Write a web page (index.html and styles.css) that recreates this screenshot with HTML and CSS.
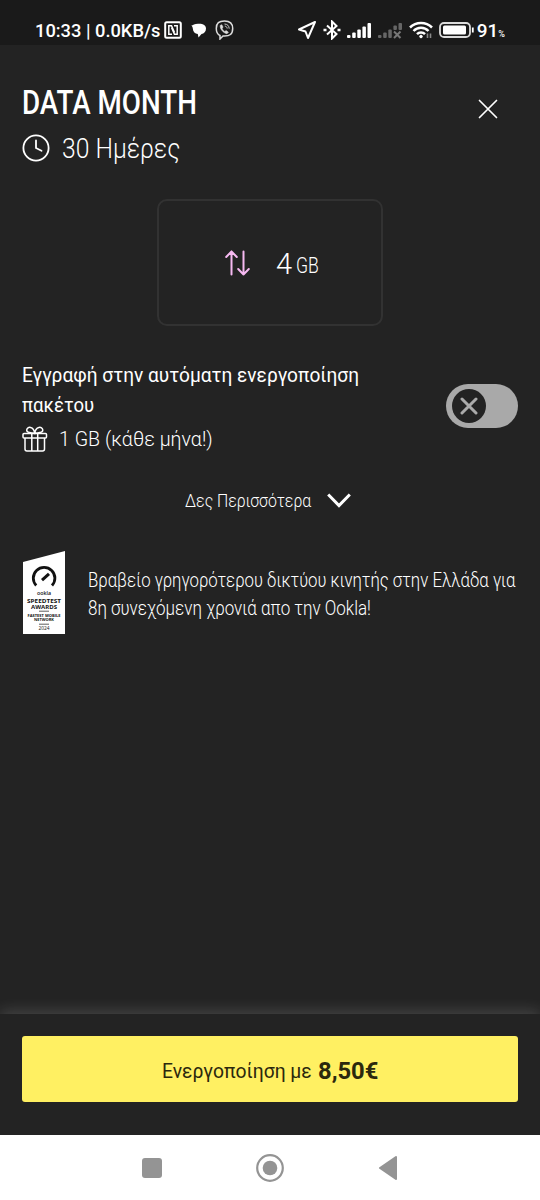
FILE: index.html
```html
<!DOCTYPE html>
<html lang="el">
<head>
<meta charset="utf-8">
<title>Data Month</title>
<link rel="stylesheet" href="styles.css">
</head>
<body>
<div class="screen">
  <header class="status">
    <div class="status-left">
      <span class="clock">10:33 | 0.0KB/s</span>
      <svg class="nfc" width="18" height="18" viewBox="0 0 18 18" fill="none" stroke="#fff" stroke-width="2"><rect x="1.200" y="1.200" width="15.600" height="15.600" rx="1.500"/><path d="M8 13.300H4.800V4.800h2.700L10.500 11.500M10 4.800h3.200v8.500h-2.700L7.500 6.500" stroke-width="1.500"/></svg>
      <svg class="chat" width="16" height="15" viewBox="0 0 16 15" fill="#fff"><path d="M.3 2.500C2 2.200 3.500.8 7 .7c5-.3 8 1.500 8 4.800s-2 5-4.500 5.500L7.500 14.500l-.7-3.500C4 10.800 2 9 1.800 5.500 1.700 4 1 3.200.3 2.500z"/></svg>
      <svg class="viber" width="19" height="20" viewBox="0 0 19 20" fill="none" stroke="#ddd" stroke-width="1.500"><path d="M9.500 1C4 1 1.300 3 1.300 8.500c0 4 1.200 6 3.700 7V19l3-3c7 .5 9.700-2 9.700-7.500S15 1 9.500 1z"/><path d="M5.200 5.500C5 9 8 12.800 12 13.800l1.400-1.600-2.300-1.600-1.200.9C8.500 11 7.500 9.500 7 8.200l1.100-.9L6.800 4.700z" fill="#ddd" stroke-width=".6"/><path d="M9.500 4c3 .2 4.500 1.700 4.700 4.700M9.800 6.100c1.500.2 2.200.9 2.400 2.400" stroke-width=".9"/></svg>
    </div>
    <div class="status-right">
      <svg width="20" height="20" viewBox="0 0 20 20" fill="none" stroke="#fff" stroke-width="2" stroke-linejoin="round"><path d="M18 2 2 9.500l6.500 2L11 18z"/></svg>
      <svg width="18" height="20" viewBox="0 0 18 20" fill="none" stroke="#fff" stroke-width="2"><path d="m4 5.500 9.500 8.500L9 18.500v-17L13.500 6 4 14.500"/><path d="M.5 10h3M14.500 10h3" stroke-width="2.500"/></svg>
      <svg width="25" height="17" viewBox="0 0 25 17" fill="#fff"><rect y="13" width="3.500" height="3" rx="1"/><rect x="5.200" y="10.500" width="3.500" height="5.500" rx="1"/><rect x="10.300" y="7.500" width="3.500" height="8.500" rx="1"/><rect x="15.400" y="4.500" width="3.500" height="11.500" rx="1"/><rect x="20.500" y="1" width="3.500" height="15" rx="1"/></svg>
      <svg width="25" height="17" viewBox="0 0 25 17" fill="#666"><rect y="13" width="3.500" height="3" rx="1"/><rect x="5.200" y="10.500" width="3.500" height="5.500" rx="1"/><rect x="10.300" y="7.500" width="3.500" height="8.500" rx="1"/><rect x="15.400" y="3.500" width="3.500" height="4.500" rx="1"/><rect x="20.500" y="1" width="3.500" height="7" rx="1"/><path d="m16 9.500 6.500 6.500m0-6.500L16 16" stroke="#777" stroke-width="2"/></svg>
      <svg width="24" height="18" viewBox="0 0 24 18" fill="none" stroke="#fff" stroke-width="2.500"><path d="M1 6.500a15.500 15.500 0 0 1 22 0M4.500 10a10.500 10.500 0 0 1 15 0M8 13.200a5.600 5.600 0 0 1 8 0"/><circle cx="12" cy="15.500" r="1.300" fill="#fff" stroke-width="1"/><path d="M18.500 12.500v4.500M21.500 12.500v4.500" stroke="#888" stroke-width="1.600"/></svg>
      <svg width="35" height="16" viewBox="0 0 35 16" fill="none"><rect x="1" y="1" width="30" height="14" rx="4" stroke="#ddd" stroke-width="1.800"/><rect x="4" y="3.500" width="23" height="9" rx="1.500" fill="#fff"/><path d="M33.800 5.500v5" stroke="#fff" stroke-width="1.800"/></svg>
      <span class="battery">91<small>%</small></span>
    </div>
  </header>

  <main class="content">
    <section class="heading">
      <div>
        <h1 class="title"><span class="fit">DATA MONTH</span></h1>
        <div class="duration">
          <svg width="28" height="28" viewBox="0 0 28 28" fill="none" stroke="#fff" stroke-width="1.800" stroke-linecap="round"><circle cx="14" cy="14" r="12.600"/><path d="M14 6.500V14l5.500 2.800"/></svg>
          <span class="fit">30 Ημέρες</span>
        </div>
      </div>
      <svg class="close" width="20" height="20" viewBox="0 0 20 20" stroke="#fff" stroke-width="1.700" stroke-linecap="round"><path d="m1.500 1.500 17 17m0-17-17 17"/></svg>
    </section>

    <section class="card">
      <svg width="26" height="26" viewBox="0 0 26 26" fill="none" stroke="#f6b9f1" stroke-width="2" stroke-linecap="round" stroke-linejoin="round"><path d="M6.500 24.500V1.500M1.200 7 6.500 1.500 11.800 7M18.500 1.500v23M13.200 19l5.300 5.500 5.300-5.500"/></svg>
      <span class="amount">4</span><span class="unit"><span class="fit">GB</span></span>
    </section>

    <section class="auto">
      <div class="auto-copy">
        <div class="auto-title"><span class="fit one">Εγγραφή στην αυτόματη ενεργοποίηση</span><br><span class="fit two">πακέτου</span></div>
        <div class="gift">
          <svg width="26" height="26" viewBox="0 0 26 26" fill="none" stroke="#fff" stroke-width="1.500" stroke-linejoin="round"><rect x="1" y="7.500" width="23.500" height="4.500" rx="1"/><path d="M3 12V23q0 2 2 2h15.500q2 0 2-2V12M9.800 7.500V25M15.700 7.500V25M12.700 7.500C10 6.500 4.500 7.500 4.700 4 5 0 12 0 12.700 7.500 13.500 0 20.500 0 20.800 4c.2 3.500-5.300 2.500-8.100 3.500z"/></svg>
          <span class="fit">1 GB (κάθε μήνα!)</span>
        </div>
      </div>
      <div class="toggle"><div class="knob"><svg width="18" height="18" viewBox="0 0 18 18" stroke="#aaa" stroke-width="3" stroke-linecap="round"><path d="m2 2 14 14m0-14L2 16"/></svg></div></div>
    </section>

    <div class="more">
      <span class="fit">Δες Περισσότερα</span>
      <svg width="24" height="15" viewBox="0 0 24 15" fill="none" stroke="#fff" stroke-width="3"><path d="m1.200 1.500 10.800 11 10.800-11"/></svg>
    </div>

    <section class="award">
      <svg class="badge" width="42" height="83" viewBox="0 0 42 83"><path d="M0 11 42 0v83H0z" fill="#fff"/><path d="M13.200 34.500A10.800 10.800 0 1 1 29 34.500" fill="none" stroke="#111" stroke-width="2.800"/><path d="m19 29.200 7-6.400" stroke="#111" stroke-width="3"/><g class="badge-text"><text x="21" y="43.500" font-size="5.500" font-weight="600" textLength="14" lengthAdjust="spacingAndGlyphs">ookla</text><text x="21" y="51.800" font-size="5.500" font-weight="700" textLength="34" lengthAdjust="spacingAndGlyphs">SPEEDTEST</text><text x="21" y="57.800" font-size="5.500" font-weight="700" textLength="26" lengthAdjust="spacingAndGlyphs">AWARDS</text><text x="21" y="66.200" font-size="3.800" font-weight="700" textLength="33" lengthAdjust="spacingAndGlyphs">FASTEST MOBILE</text><text x="21" y="70.200" font-size="3.800" font-weight="700" textLength="20" lengthAdjust="spacingAndGlyphs">NETWORK</text><text x="21" y="79.200" font-size="5" textLength="11" lengthAdjust="spacingAndGlyphs">2024</text></g><path d="M16 60.200h10M16 73.200h10" stroke="#333" stroke-width=".8"/></svg>
      <p class="award-copy"><span class="fit one">Βραβείο γρηγορότερου δικτύου κινητής στην Ελλάδα για</span><br><span class="fit two">8η συνεχόμενη χρονιά απο την Ookla!</span></p>
    </section>
  </main>

  <footer class="footer">
    <button class="activate"><span class="label"><span class="fit">Ενεργοποίηση με</span></span><b class="price"><span class="fit">8,50€</span></b></button>
  </footer>

  <nav class="navbar">
    <svg width="20" height="20" viewBox="0 0 20 20"><rect width="20" height="20" rx="3" fill="#949494"/></svg>
    <svg width="28" height="28" viewBox="0 0 28 28"><circle cx="14" cy="14" r="12.800" fill="none" stroke="#949494" stroke-width="2.200"/><circle cx="14" cy="14" r="7.300" fill="#949494"/></svg>
    <svg width="20" height="24" viewBox="0 0 20 24"><path d="M18 1 2 12l16 11z" fill="#949494" stroke="#949494" stroke-width="2" stroke-linejoin="round"/></svg>
  </nav>
</div>
</body>
</html>
```
FILE: styles.css
```css
* { box-sizing: border-box; }
body { margin: 0; background: #232323; font-family: Roboto, "Noto Sans", sans-serif; color: #fff; }
svg { flex: none; display: block; }
.screen { width: 540px; height: 1200px; display: flex; flex-direction: column; overflow: hidden; background: #232323; }
.status { height: 45px; flex: none; background: #1a1a1a; display: flex; justify-content: space-between; padding: 15px 35px 0 35px; }
.status-left, .status-right { display: flex; align-items: center; height: 30px; }
.clock { font-size: 18.3px; font-weight: 480; width: 125px; white-space: nowrap; }
.nfc { margin-left: 4px; }
.chat { margin-left: 9px; }
.viber { margin-left: 8px; }
.status-right { gap: 6px; }
.battery { font-size: 19px; font-weight: 480; margin-left: -3px; white-space: nowrap; }
.battery small { font-size: 9px; }

/* Condensed lettering: glyphs are narrowed from their left edge */
.fit { display: inline-block; white-space: nowrap; transform-origin: 0 50%; }

.content { flex: 1; padding: 37px 22px 0; }
.heading { display: flex; justify-content: space-between; }
.title { margin: 0; font-size: 34px; line-height: 40px; font-weight: 480; }
.title .fit { transform: scaleX(.817); }
.duration { display: flex; align-items: center; gap: 12px; height: 53px; font-size: 28px; font-weight: 330; }
.duration svg { margin-top: -1px; }
.duration .fit { transform: scaleX(.882); }
.close { margin: 17px 20px 0 0; }

.card { width: 226px; height: 127px; margin: 24px auto 0; border: 2px solid #323232; border-radius: 10px; display: flex; align-items: center; padding-left: 66px; }
.amount { font-size: 29px; font-weight: 330; margin-left: 25px; width: 20px; line-height: 40px; padding-top: 3px; }
.unit { font-size: 22px; font-weight: 330; line-height: 40px; padding-top: 6px; }
.unit .fit { transform: scaleX(.8); }

.auto { display: flex; justify-content: space-between; margin-top: 34px; height: 96px; }
.auto-copy { width: 400px; }
.auto-title { font-size: 21px; line-height: 30px; font-weight: 420; }
.auto-title .one { transform: scaleX(.91); }
.auto-title .two { transform: scaleX(.885); }
.gift { display: flex; align-items: center; gap: 11px; height: 38px; font-size: 21px; font-weight: 350; }
.gift .fit { transform: scaleX(.935); }
.toggle { width: 72px; height: 44px; margin-top: 24px; border-radius: 22px; background: #a9a9a9; padding: 5px 6px; }
.knob { width: 34px; height: 34px; border-radius: 50%; background: #232323; display: grid; place-items: center; }

.more { display: flex; align-items: center; height: 30px; margin-top: 29px; padding-left: 163px; font-size: 19px; font-weight: 350; }
.more .fit { width: 142px; transform: scaleX(.834); }
.more svg { margin-top: 1px; }

.award { display: flex; margin-top: 36px; padding-left: 1px; }
.badge-text { fill: #111; text-anchor: middle; font-family: "Open Sans", sans-serif; }
.award-copy { margin: 15px 0 0 23px; font-size: 20px; line-height: 28px; font-weight: 350; }
.award-copy .one { transform: scaleX(.839); }
.award-copy .two { transform: scaleX(.85); }

.footer { height: 121px; flex: none; padding: 22px 22px 0; background: #232323; box-shadow: 0 -3px 14px rgba(255,255,255,.16); }
.activate { width: 496px; height: 66px; border: 0; border-radius: 3px; background: #fff062; color: #2b280d; font-family: inherit; display: flex; align-items: center; padding: 3px 0 0 140px; }
.label { width: 156px; font-size: 21px; text-align: left; }
.label .fit { transform: scaleX(.92); }
.price { font-size: 24px; font-weight: 700; }
.price .fit { transform: scaleX(.99); }

.navbar { height: 65px; flex: none; background: #fff; display: flex; justify-content: center; align-items: center; gap: 94px; padding-right: 1px; }
```
